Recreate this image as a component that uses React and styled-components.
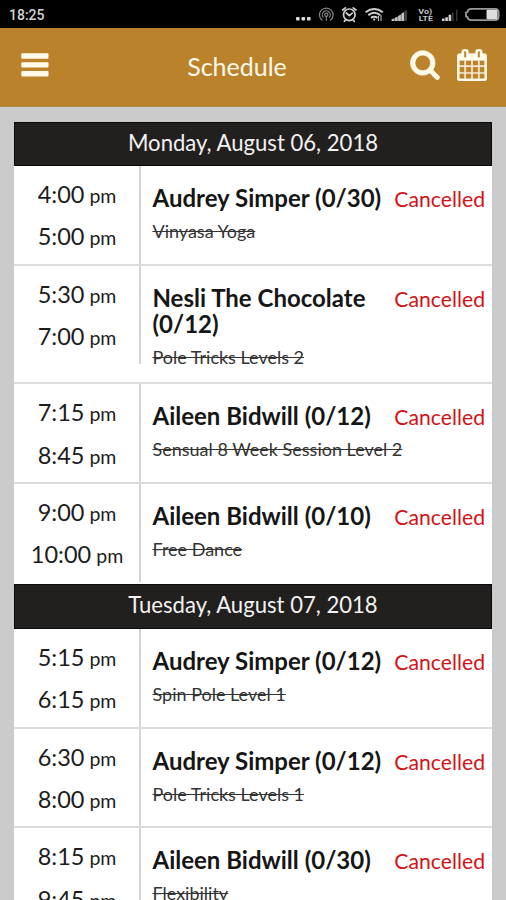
import React from 'react'
import styled, { createGlobalStyle } from 'styled-components'

const GlobalStyle = createGlobalStyle`
	body {
		margin: 0;
		background: #cbcbcb;
		font-family: Lato, sans-serif;
		overflow: hidden;
	}
`

const Screen = styled.div`
	height: 900px;
	overflow: hidden;
	background: #cbcbcb;
`

const StatusBar = styled.div`
	display: flex;
	align-items: center;
	justify-content: space-between;
	box-sizing: border-box;
	height: 28px;
	padding: 2px 6px 0 9px;
	background: #000;
	color: #d2d2d2;
`

const Clock = styled.span`
	font: 500 14px/20px Roboto, sans-serif;
`

const StatusIcons = styled.svg`
	display: block;
	margin-top: -1px;
`

const Header = styled.header`
	display: grid;
	grid-template-columns: 1fr auto 1fr;
	align-items: center;
	box-sizing: border-box;
	height: 79px;
	padding: 0 19px 4px 21px;
	background: #bb822c;
	border-bottom: 1px solid #ab8a55;
	color: #fffaea;
`

const PageTitle = styled.h1`
	margin: 2px 0 0;
	padding-right: 34px;
	font-size: 25px;
	font-weight: 400;
	line-height: 30px;
`

const IconButton = styled.button`
	display: block;
	padding: 0;
	border: 0;
	background: none;
	color: inherit;
	svg {
		display: block;
		fill: currentColor;
	}
`

const Actions = styled.div`
	display: flex;
	align-items: center;
	justify-content: flex-end;
	gap: 17px;
`

const Agenda = styled.main`
	margin: 14.5px 14px 0;
	background: #fff;
`

const DayTitle = styled.h2`
	box-sizing: border-box;
	height: 44.5px;
	margin: 0;
	border: 1px solid #0a0a0a;
	background: #22201f;
	color: #f2f2f2;
	font-size: 22.1px;
	font-weight: 400;
	line-height: 40px;
	text-align: center;
`

const Lesson = styled.div`
	display: flex;
	align-items: flex-start;
	box-sizing: border-box;
	height: ${({ $tall, $last }) => ($tall ? '118.4px' : $last ? '100.4px' : '99.8px')};
	border-bottom: 2px solid ${({ $last }) => ($last ? '#fff' : '#dcdcdc')};
`

const Times = styled.div`
	box-sizing: border-box;
	flex: none;
	width: 127px;
	height: 97.8px;
	padding: 7px 0 0 1px;
	border-right: 2px solid #d4d4d4;
	color: #1c1c1c;
	text-align: center;
`

const Time = styled.div`
	height: 42.4px;
	font-size: 23.5px;
	line-height: 42px;
	white-space: nowrap;
	span {
		font-size: 19.5px;
		line-height: 1;
	}
`

const Details = styled.div`
	flex: 1;
	min-width: 0;
	padding: 19px 0 0 11.5px;
`

const Teacher = styled.div`
	color: #161616;
	font-size: 24px;
	font-weight: 700;
	line-height: 26px;
`

const ClassName = styled.div`
	margin-top: 9px;
	color: #333;
	font-size: 18px;
	line-height: 22px;
	text-decoration: line-through;
	white-space: nowrap;
`

const Status = styled.div`
	flex: none;
	padding: 19px 7px 0 8px;
	color: #d31218;
	font-size: 21.2px;
	line-height: 28px;
`

const days = [
	{
		title: 'Monday, August 06, 2018',
		lessons: [
			{ from: '4:00', to: '5:00', teacher: 'Audrey Simper (0/30)', name: 'Vinyasa Yoga' },
			{ from: '5:30', to: '7:00', teacher: 'Nesli The Chocolate (0/12)', name: 'Pole Tricks Levels 2', tall: true },
			{ from: '7:15', to: '8:45', teacher: 'Aileen Bidwill (0/12)', name: 'Sensual 8 Week Session Level 2' },
			{ from: '9:00', to: '10:00', teacher: 'Aileen Bidwill (0/10)', name: 'Free Dance' },
		],
	},
	{
		title: 'Tuesday, August 07, 2018',
		lessons: [
			{ from: '5:15', to: '6:15', teacher: 'Audrey Simper (0/12)', name: 'Spin Pole Level 1' },
			{ from: '6:30', to: '8:00', teacher: 'Audrey Simper (0/12)', name: 'Pole Tricks Levels 1' },
			{ from: '8:15', to: '9:45', teacher: 'Aileen Bidwill (0/30)', name: 'Flexibility' },
		],
	},
]

const BarsIcon = () => (
	<svg width="28" height="24" viewBox="0 0 28 24">
		<rect x="0.3" y="0.3" width="27.2" height="5.4" rx="1" />
		<rect x="0.3" y="9.2" width="27.2" height="5.4" rx="1" />
		<rect x="0.3" y="18.1" width="27.2" height="5.4" rx="1" />
	</svg>
)

const SearchIcon = () => (
	<svg width="30" height="30" viewBox="-20 90 1704 1722" stroke="currentColor" strokeWidth="40">
		<path d="M1152 832q0-185-131.5-316.5t-316.5-131.5-316.5 131.5-131.5 316.5 131.5 316.5 316.5 131.5 316.5-131.5 131.5-316.5zm512 832q0 52-38 90t-90 38q-54 0-90-38l-343-342q-179 124-399 124-143 0-273.5-55.5t-225-150-150-225-55.5-273.5 55.5-273.5 150-225 225-150 273.5-55.5 273.5 55.5 225 150 150 225 55.5 273.5q0 220-124 399l343 343q37 37 37 90z" />
	</svg>
)

const CalendarIcon = () => (
	<svg width="30" height="32" viewBox="64 0 1664 1792" stroke="currentColor" strokeWidth="20">
		<path d="M192 1664h288v-288h-288v288zm352 0h320v-288h-320v288zm-352-352h288v-320h-288v320zm352 0h320v-320h-320v320zm-352-384h288v-288h-288v288zm736 736h320v-288h-320v288zm-384-736h320v-288h-320v288zm768 736h288v-288h-288v288zm-384-352h320v-320h-320v320zm-352-864v-288q0-13-9.5-22.5t-22.5-9.5h-64q-13 0-22.5 9.5t-9.5 22.5v288q0 13 9.5 22.5t22.5 9.5h64q13 0 22.5-9.5t9.5-22.5zm736 864h288v-320h-288v320zm-384-384h320v-288h-320v288zm384 0h288v-288h-288v288zm32-480v-288q0-13-9.5-22.5t-22.5-9.5h-64q-13 0-22.5 9.5t-9.5 22.5v288q0 13 9.5 22.5t22.5 9.5h64q13 0 22.5-9.5t9.5-22.5zm384-64v1280q0 52-38 90t-90 38h-1408q-52 0-90-38t-38-90v-1280q0-52 38-90t90-38h128v-96q0-66 47-113t113-47h64q66 0 113 47t47 113v96h384v-96q0-66 47-113t113-47h64q66 0 113 47t47 113v96h128q52 0 90 38t38 90z" />
	</svg>
)

const PhoneStatus = () => (
	<StatusIcons width="206" height="20" viewBox="294 5 206 20" fill="none" stroke="#bdbdbd">
		<g fill="#dedede" stroke="none">
			<rect x="296" y="17" width="3.6" height="3.6" rx="1" />
			<rect x="301.5" y="17" width="3.6" height="3.6" rx="1" />
			<rect x="307" y="17" width="3.6" height="3.6" rx="1" />
		</g>
		{/* hotspot */}
		<g stroke="#858585" strokeWidth="1.2">
			<path d="M322.5 20.6a6.8 6.8 0 1 1 7.6 0M323.4 17.7a4 4 0 1 1 5.8 0" />
			<circle cx="326.3" cy="14.8" r="1.6" />
			<path d="M326.3 16.5v4.3" />
		</g>
		{/* alarm */}
		<g stroke="#cfcfcf" strokeWidth="1.7" strokeLinecap="round">
			<circle cx="349.3" cy="14.8" r="5.8" />
			<path d="M342.6 10l2.8-2.2M356 10l-2.8-2.2M346.3 13l3 2.6 3-2.4M345.3 20.2l-1 1.2M353.3 20.2l1 1.2" />
		</g>
		{/* wifi */}
		<g stroke="#cfcfcf" strokeWidth="2">
			<path d="M365.6 12.2q8.6-6.4 17.2 0M368.3 15.1q5.9-4.6 11.8 0M371 17.9q3.2-2.4 6.4 0" />
			<circle cx="374.2" cy="19.6" r="1.1" fill="#cfcfcf" stroke="none" />
			<path d="M378.4 16v5M381 15v6" strokeWidth="1" />
		</g>
		<g stroke="none" fill="#c4c4c4">
			<path d="M391.5 19.5l3-1.3v2.7h-3zM394.9 17.8l2.8-1.4v4.5h-2.8zM398.1 16l2.8-1.5v6.4h-2.8zM401.3 13.8l2.8-1.8v8.9h-2.8z" />
			<path d="M404.5 11.4l2.2-1.8v11.3h-2.2z" fill="#4d4d4d" />
		</g>
		<text x="418.3" y="13.6" fill="#c4c4c4" stroke="none" fontFamily="Roboto, sans-serif" fontSize="6.6" fontWeight="700" textLength="14" lengthAdjust="spacingAndGlyphs">Vo)</text>
		<text x="418.8" y="21.1" fill="#c4c4c4" stroke="none" fontFamily="Roboto, sans-serif" fontSize="7" fontWeight="700" textLength="14" lengthAdjust="spacingAndGlyphs">LTE</text>
		<g stroke="none" fill="#d0d0d0">
			<path d="M442 18.6h2.6v2.3H442zM445.3 17.2h2.6v3.7h-2.6zM448.6 14.8h2.6v6.1h-2.6z" />
			<path d="M451.8 12.4h1.8v8.5h-1.8zM456 9.5h1.4v11.4H456z" fill="#383838" />
		</g>
		{/* battery */}
		<path d="M471 8.8h24q3.6 0 3.6 3.6v4.2q0 3.6-3.6 3.6h-24q-3 0-3.5-3l-1.5-.8v-3.8l1.5-.8q.5-3 3.5-3z" stroke="#999" strokeWidth="1.8" />
		<rect x="486.5" y="9.8" width="11" height="9.4" rx="1.2" fill="#dedede" stroke="none" />
	</StatusIcons>
)

const LessonRow = ({ lesson, last }) => (
	<Lesson $tall={lesson.tall} $last={last}>
		<Times>
			<Time>{lesson.from}<span> pm</span></Time>
			<Time>{lesson.to}<span> pm</span></Time>
		</Times>
		<Details>
			<Teacher>{lesson.teacher}</Teacher>
			<ClassName>{lesson.name}</ClassName>
		</Details>
		<Status>Cancelled</Status>
	</Lesson>
)

export default function App() {
	return (
		<Screen>
			<GlobalStyle />
			<StatusBar>
				<Clock>18:25</Clock>
				<PhoneStatus />
			</StatusBar>
			<Header>
				<IconButton aria-label="Menu"><BarsIcon /></IconButton>
				<PageTitle>Schedule</PageTitle>
				<Actions>
					<IconButton aria-label="Search"><SearchIcon /></IconButton>
					<IconButton aria-label="Calendar"><CalendarIcon /></IconButton>
				</Actions>
			</Header>
			<Agenda>
				{days.map((day) => (
					<section key={day.title}>
						<DayTitle>{day.title}</DayTitle>
						{day.lessons.map((lesson, i) => (
							<LessonRow key={lesson.from} lesson={lesson} last={i === day.lessons.length - 1} />
						))}
					</section>
				))}
			</Agenda>
		</Screen>
	)
}
